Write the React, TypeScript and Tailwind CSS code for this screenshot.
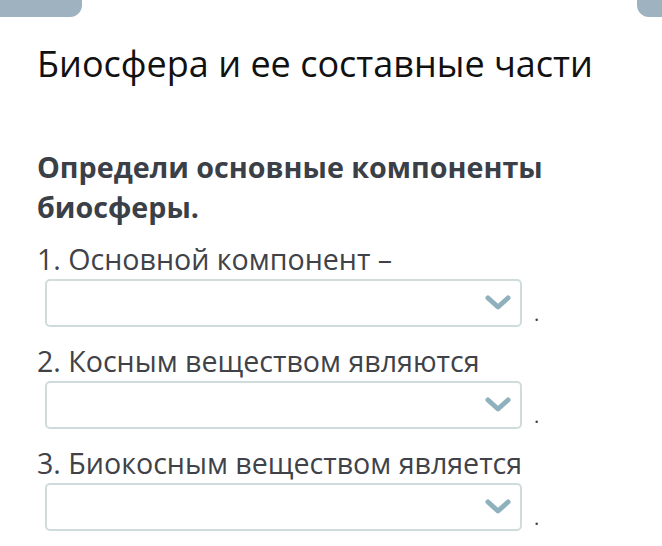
import React from 'react';

const items = [
  '1. Основной компонент –',
  '2. Косным веществом являются',
  '3. Биокосным веществом является',
];

const Chevron: React.FC = () => (
  <svg width="28" height="18" viewBox="0 0 28 18" className="text-[#8fb1bd]">
    <path d="M4 4 L14 13 L24 4" fill="none" stroke="currentColor" strokeWidth="5" strokeLinecap="round" strokeLinejoin="round" />
  </svg>
);

const App: React.FC = () => {
  return (
    <div className="relative w-[662px] h-[546px] overflow-hidden bg-white font-['Open_Sans',sans-serif]">
      {/* top tabs */}
      <div className="flex justify-between">
        <div className="w-[82px] h-[17px] bg-[#9fb2bf] rounded-br-[12px]" />
        <div className="w-[25px] h-[17px] bg-[#9fb2bf] rounded-bl-[12px]" />
      </div>

      <div className="pl-[37px]">
        <h1 className="mt-[22px] text-[36px] leading-[50px] font-normal text-[#111] whitespace-nowrap">Биосфера и ее составные части</h1>

        <p className="mt-[58px] text-[28.7px] leading-[40px] font-bold text-[#3b3f47] w-[560px]">
          Определи основные компоненты биосферы.
        </p>

        <div className="mt-[14px] flex flex-col gap-[16px]">
          {items.map((label) => (
            <div key={label}>
              <div className="text-[28.6px] leading-[36px] text-[#404248] whitespace-nowrap">{label}</div>
              <div className="mt-[2px] flex items-end">
                <div className="ml-[8px] w-[477px] h-[48px] border-2 border-[#cfdcdc] rounded-[5px] bg-white flex items-center justify-end pr-[8px]">
                  <Chevron />
                </div>
                <span className="ml-[12px] mb-[3px] text-[20px] leading-[20px] text-[#404248]">.</span>
              </div>
            </div>
          ))}
        </div>
      </div>
    </div>
  );
};

export default App;
